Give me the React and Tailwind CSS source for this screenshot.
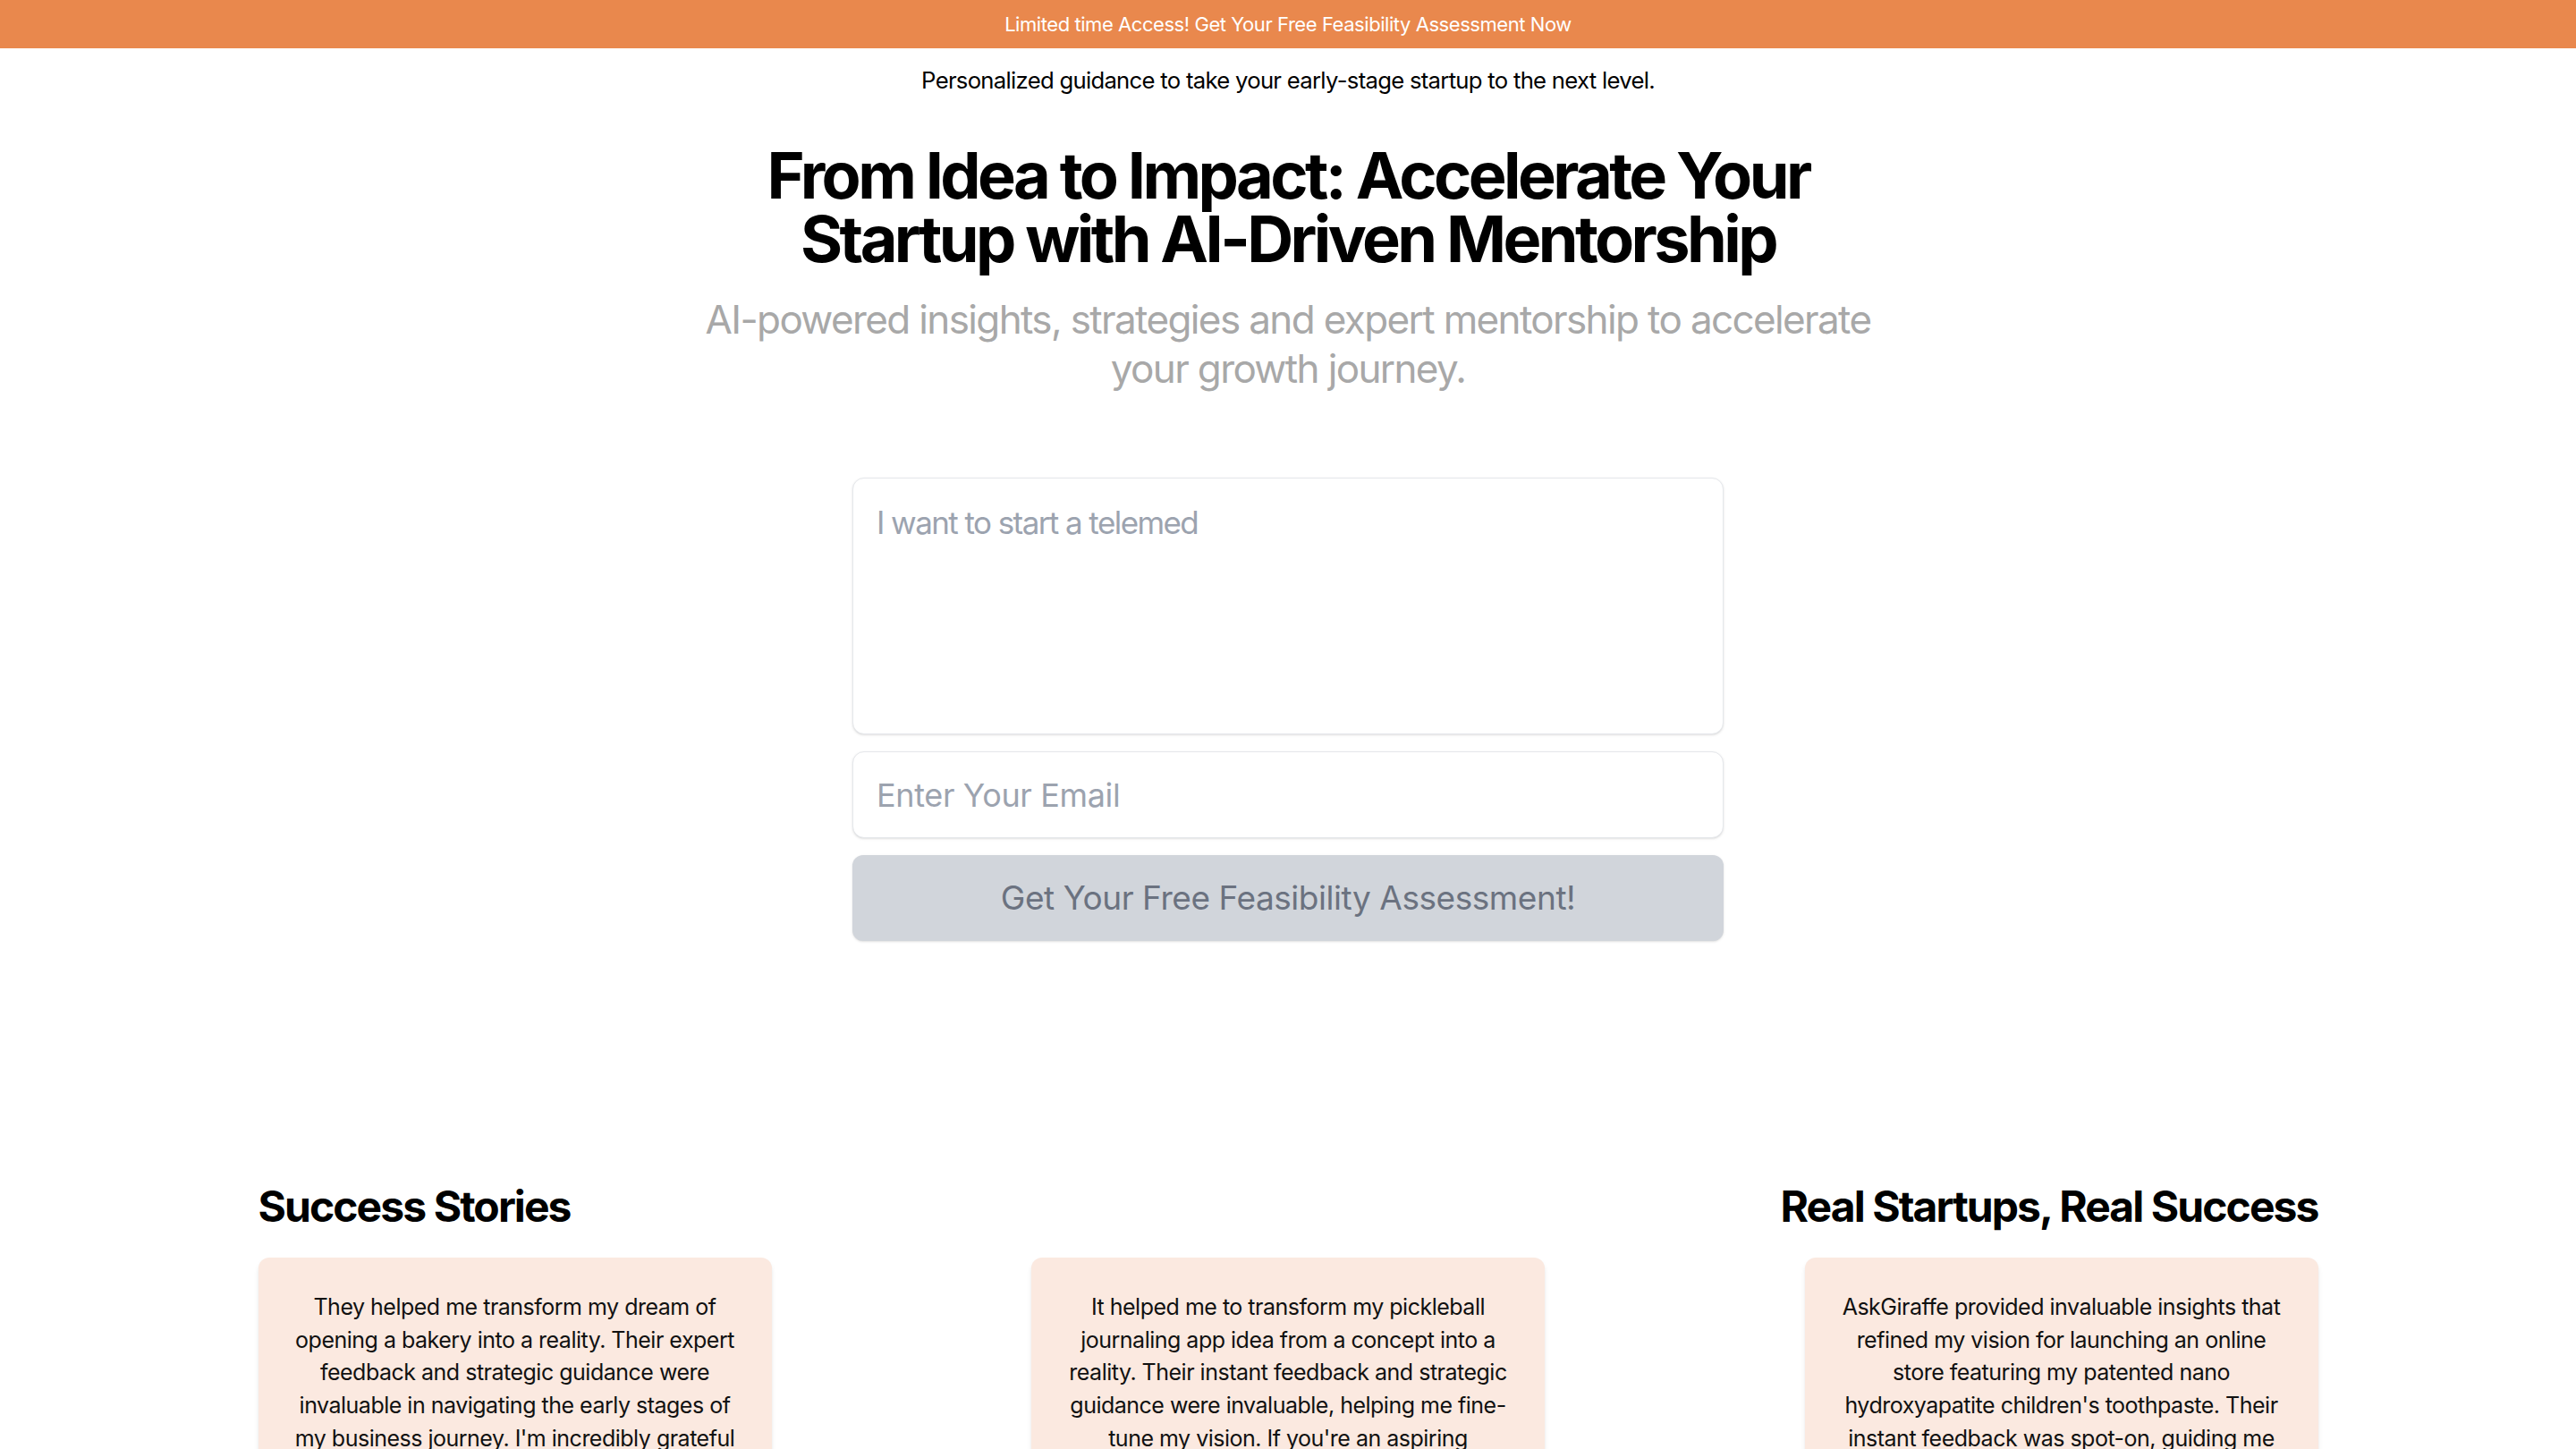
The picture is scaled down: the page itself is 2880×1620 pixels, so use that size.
import { useState } from 'react';

const stories = [
  {
    id: 1,
    text: "They helped me transform my dream of\nopening a bakery into a reality. Their expert\nfeedback and strategic guidance were\ninvaluable in navigating the early stages of\nmy business journey. I'm incredibly grateful\nfor their support and would recommend\nthem to any aspiring founder.",
  },
  {
    id: 2,
    text: "It helped me to transform my pickleball\njournaling app idea from a concept into a\nreality. Their instant feedback and strategic\nguidance were invaluable, helping me fine-\ntune my vision. If you're an aspiring\nentrepreneur, I can't recommend\nthem enough.",
  },
  {
    id: 3,
    text: "AskGiraffe provided invaluable insights that\nrefined my vision for launching an online\nstore featuring my patented nano\nhydroxyapatite children's toothpaste. Their\ninstant feedback was spot-on, guiding me\nthrough every step of the process.",
  },
];

const App = () => {
  const [idea, setIdea] = useState('');
  const [email, setEmail] = useState('');
  const ready = idea.trim() && email.trim();

  return (
    <div className="min-h-screen bg-white font-['Inter',sans-serif] text-black">
      {/* Promo banner */}
      <div className="h-[54px] bg-[#E9884D] flex items-center justify-center">
        <p className="text-white text-[22px] tracking-[-0.02em]">
          Limited time Access! Get Your Free Feasibility Assessment Now
        </p>
      </div>

      {/* Hero */}
      <div className="flex flex-col items-center text-center">
        <p className="mt-[18px] text-[25.7px] leading-[36px] tracking-[-0.028em]">
          Personalized guidance to take your early-stage startup to the next level.
        </p>
        <h1 className="mt-[52px] w-[1300px] text-[72px] leading-[71px] font-bold tracking-[-0.05em]">
          From Idea to Impact: Accelerate Your
          <br />
          Startup with AI-Driven Mentorship
        </h1>
        <p className="mt-[28px] w-[1340px] text-[44px] leading-[55px] text-[#a8a8a8] tracking-[-0.037em]">
          AI-powered insights, strategies and expert mentorship to accelerate your growth journey.
        </p>

        {/* Form */}
        <div className="mt-[94px] w-[974px] flex flex-col">
          <textarea
            value={idea}
            onChange={e => setIdea(e.target.value)}
            placeholder="I want to start a telemed"
            className="h-[287px] resize-none rounded-[13px] border border-[#e5e7eb] bg-white px-[26px] pt-[27px] text-[35px] leading-[44px] tracking-[-0.045em] text-gray-800 placeholder:text-[#9ca3af] outline-none shadow-sm"
          />
          <input
            value={email}
            onChange={e => setEmail(e.target.value)}
            placeholder="Enter Your Email"
            className="mt-[19px] h-[97px] rounded-[13px] border border-[#e5e7eb] bg-white px-[26px] text-[36px] tracking-[-0.01em] text-gray-800 placeholder:text-[#9ca3af] outline-none shadow-sm"
          />
          <button
            disabled={!ready}
            className={`mt-[19px] h-[96px] rounded-[12px] text-[37px] tracking-[-0.012em] shadow-sm ${
              ready ? 'bg-[#E9884D] text-white' : 'bg-[#d1d5db] text-[#6b7280]'
            }`}
          >
            Get Your Free Feasibility Assessment!
          </button>
        </div>
      </div>

      {/* Testimonials */}
      <div className="mt-[267px] w-[2303px] mx-auto pb-24">
        <div className="flex justify-between">
          <h2 className="text-[48px] leading-[60px] font-bold tracking-[-0.04em]">Success Stories</h2>
          <h2 className="text-[48px] leading-[60px] font-bold tracking-[-0.04em]">Real Startups, Real Success</h2>
        </div>
        <div className="mt-[27px] flex justify-between items-start">
          {stories.map(s => (
            <div key={s.id} className="w-[574px] rounded-[12px] bg-[#FBE9E0] px-[20px] py-[37px] shadow-md">
              <p className="whitespace-pre-line text-center text-[25px] leading-[36.7px] text-[#111] tracking-[-0.02em]">{s.text}</p>
            </div>
          ))}
        </div>
      </div>
    </div>
  );
};

export default App;
